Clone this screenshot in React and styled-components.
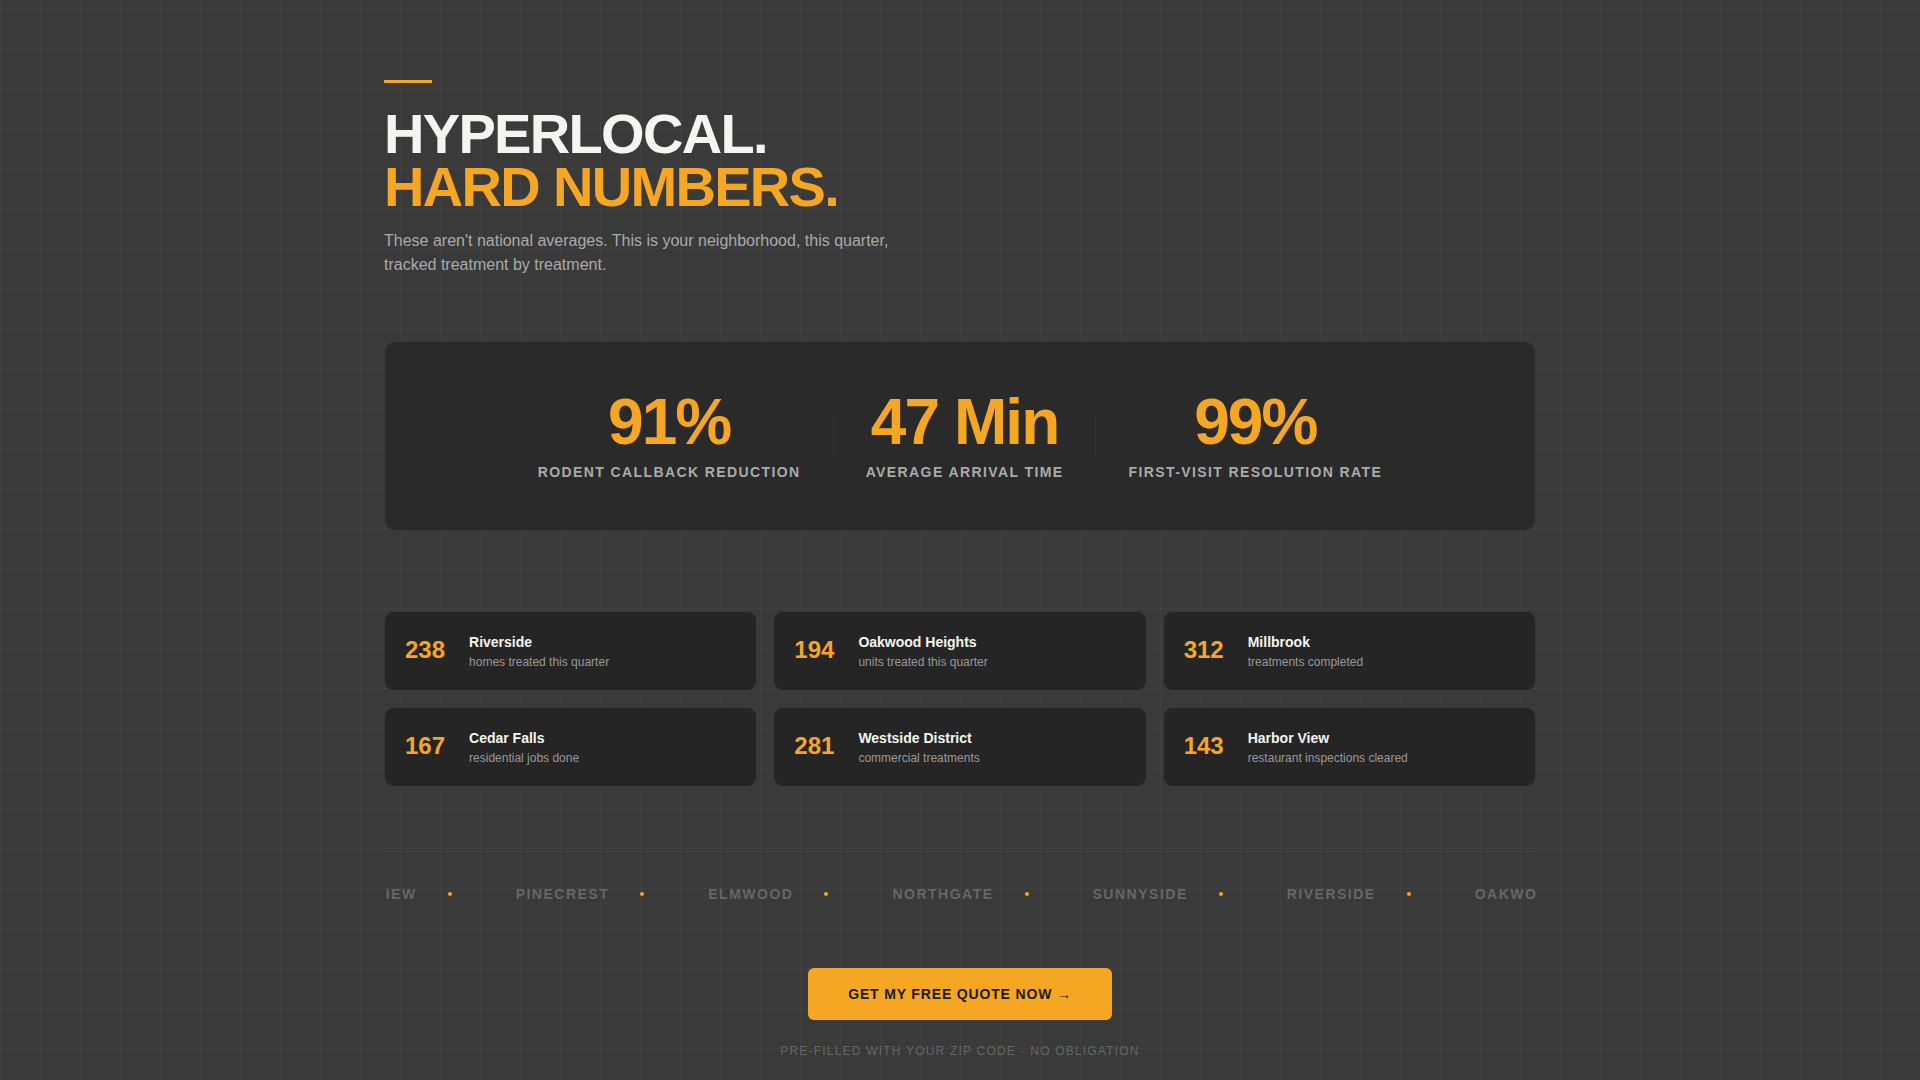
import React from "react";
import styled, { createGlobalStyle } from "styled-components";

const amber = "#f5a623";

const GlobalStyle = createGlobalStyle`
  * {
    box-sizing: border-box;
  }
  html, body {
    margin: 0;
    padding: 0;
  }
  body {
    background-color: #3a3a3a;
    background-image:
      linear-gradient(rgba(255, 255, 255, 0.03) 1px, transparent 1px),
      linear-gradient(90deg, rgba(255, 255, 255, 0.03) 1px, transparent 1px);
    background-size: 40px 40px;
    background-position: 0 8px;
    font-family: "Liberation Sans", Arial, sans-serif;
    overflow: hidden;
  }
`;

const Page = styled.main`
  width: 1152px;
  height: 1080px;
  margin: 0 auto;
  padding-top: 80px;
`;

const Accent = styled.div`
  width: 48px;
  height: 3px;
  background: ${amber};
  margin-bottom: 24px;
`;

const Title = styled.h1`
  margin: 0 0 16px;
  font-size: 56px;
  line-height: 53px;
  font-weight: 700;
  letter-spacing: -0.03em;
  color: #f5f5f0;
  text-transform: uppercase;
`;

const TitleAccent = styled.span`
  display: block;
  color: ${amber};
`;

const Intro = styled.p`
  margin: 0 0 64px;
  max-width: 520px;
  font-size: 16px;
  line-height: 24px;
  color: #aaaaaa;
`;

const StatsPanel = styled.section`
  display: flex;
  justify-content: center;
  align-items: center;
  gap: 1px;
  height: 190px;
  padding-bottom: 2px;
  margin-bottom: 80px;
  background: #2a2a2a;
  border: 1px solid #383838;
  border-radius: 12px;
`;

const Stat = styled.div`
  position: relative;
  padding: 0 32px;
  text-align: center;
  &:not(:last-child)::after {
    content: "";
    position: absolute;
    right: -1px;
    top: 50%;
    width: 1px;
    height: 44px;
    transform: translateY(-50%);
    background: #333333;
  }
`;

const StatValue = styled.div`
  font-size: 64px;
  line-height: 64px;
  font-weight: 700;
  letter-spacing: -0.03em;
  color: ${amber};
  margin-bottom: 9px;
`;

const StatLabel = styled.div`
  font-size: 14px;
  line-height: 18px;
  font-weight: 700;
  letter-spacing: 0.1em;
  color: #aaaaaa;
  text-transform: uppercase;
`;

const AreaGrid = styled.section`
  display: grid;
  grid-template-columns: repeat(3, 1fr);
  gap: 16px;
  margin-bottom: 64px;
`;

const AreaCard = styled.article`
  display: flex;
  align-items: center;
  gap: 24px;
  height: 80px;
  padding: 0 20px;
  background: #252525;
  border-radius: 10px;
  border: 1px solid #383838;
`;

const AreaCount = styled.div`
  font-size: 24px;
  font-weight: 700;
  color: ${amber};
  margin-bottom: 2px;
`;

const AreaText = styled.div`
  padding-top: 1px;
`;

const AreaName = styled.div`
  font-size: 14px;
  line-height: 18px;
  font-weight: 700;
  color: #f5f5f0;
  margin-bottom: 3px;
`;

const AreaNote = styled.div`
  font-size: 12px;
  line-height: 16px;
  color: #999999;
`;

const Ticker = styled.div`
  overflow: hidden;
  border-top: 1px solid #444444;
  padding: 32px 0;
  margin-bottom: 32px;
`;

const TickerTrack = styled.div`
  display: flex;
  width: max-content;
  transform: translateX(-85px);
`;

const TickerItem = styled.div`
  display: flex;
  align-items: center;
  font-size: 14px;
  line-height: 20px;
  font-weight: 700;
  letter-spacing: 1.5px;
  color: #666666;
  text-transform: uppercase;
  padding-right: 64px;
  white-space: nowrap;
  &::after {
    content: "";
    width: 4px;
    height: 4px;
    margin-left: 31px;
    border-radius: 50%;
    background: ${amber};
  }
`;

const CtaBlock = styled.div`
  display: flex;
  flex-direction: column;
  align-items: center;
`;

const CtaButton = styled.button`
  width: 304px;
  height: 52px;
  border: 0;
  border-radius: 6px;
  background: ${amber};
  color: #1a1a1a;
  font-family: inherit;
  font-size: 14px;
  font-weight: 700;
  letter-spacing: 0.06em;
  text-transform: uppercase;
  margin-bottom: 23px;
`;

const CtaNote = styled.div`
  font-size: 12px;
  line-height: 16px;
  letter-spacing: 0.1em;
  color: #666666;
  text-transform: uppercase;
`;

const stats = [
  { value: "91%", label: "Rodent callback reduction" },
  { value: "47 Min", label: "Average arrival time" },
  { value: "99%", label: "First-visit resolution rate" }
];

const areas = [
  { count: 238, name: "Riverside", note: "homes treated this quarter" },
  { count: 194, name: "Oakwood Heights", note: "units treated this quarter" },
  { count: 312, name: "Millbrook", note: "treatments completed" },
  { count: 167, name: "Cedar Falls", note: "residential jobs done" },
  { count: 281, name: "Westside District", note: "commercial treatments" },
  { count: 143, name: "Harbor View", note: "restaurant inspections cleared" }
];

const tickerNames = [
  "Harbor View",
  "Pinecrest",
  "Elmwood",
  "Northgate",
  "Sunnyside",
  "Riverside",
  "Oakwood Heights"
];

const App = () => {
  return (
    <Page>
      <GlobalStyle />
      <Accent />
      <Title>
        Hyperlocal.
        <TitleAccent>Hard Numbers.</TitleAccent>
      </Title>
      <Intro>
        These aren't national averages. This is your neighborhood, this quarter,
        tracked treatment by treatment.
      </Intro>
      <StatsPanel>
        {stats.map(stat => (
          <Stat key={stat.label}>
            <StatValue>{stat.value}</StatValue>
            <StatLabel>{stat.label}</StatLabel>
          </Stat>
        ))}
      </StatsPanel>
      <AreaGrid>
        {areas.map(area => (
          <AreaCard key={area.name}>
            <AreaCount>{area.count}</AreaCount>
            <AreaText>
              <AreaName>{area.name}</AreaName>
              <AreaNote>{area.note}</AreaNote>
            </AreaText>
          </AreaCard>
        ))}
      </AreaGrid>
      <Ticker>
        <TickerTrack>
          {tickerNames.map(name => (
            <TickerItem key={name}>{name}</TickerItem>
          ))}
        </TickerTrack>
      </Ticker>
      <CtaBlock>
        <CtaButton>Get my free quote now →</CtaButton>
        <CtaNote>Pre-filled with your zip code · No obligation</CtaNote>
      </CtaBlock>
    </Page>
  );
};

export default App;
